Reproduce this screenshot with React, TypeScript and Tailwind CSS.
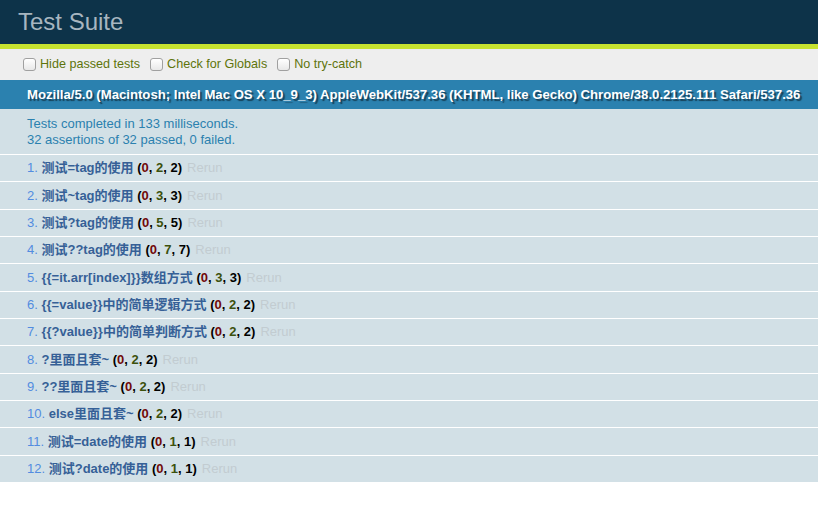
const tests = [
  { name: '测试=tag的使用', failed: 0, passed: 2, total: 2 },
  { name: '测试~tag的使用', failed: 0, passed: 3, total: 3 },
  { name: '测试?tag的使用', failed: 0, passed: 5, total: 5 },
  { name: '测试??tag的使用', failed: 0, passed: 7, total: 7 },
  { name: '{{=it.arr[index]}}数组方式', failed: 0, passed: 3, total: 3 },
  { name: '{{=value}}中的简单逻辑方式', failed: 0, passed: 2, total: 2 },
  { name: '{{?value}}中的简单判断方式', failed: 0, passed: 2, total: 2 },
  { name: '?里面且套~', failed: 0, passed: 2, total: 2 },
  { name: '??里面且套~', failed: 0, passed: 2, total: 2 },
  { name: 'else里面且套~', failed: 0, passed: 2, total: 2 },
  { name: '测试=date的使用', failed: 0, passed: 1, total: 1 },
  { name: '测试?date的使用', failed: 0, passed: 1, total: 1 },
]

const toolbarOptions = ['Hide passed tests', 'Check for Globals', 'No try-catch']

function Checkbox() {
  return (
    <span className="inline-block w-[13px] h-[13px] rounded-[3px] border border-[#a0a0a0] bg-gradient-to-b from-white to-[#e8e8e8] shadow-[inset_0_1px_0_rgba(255,255,255,0.8)]" />
  )
}

export default function App() {
  return (
    <div className="w-[818px] min-h-[508px] bg-white font-['Liberation_Sans','Noto_Sans_CJK_SC',sans-serif]">
      {/* Header */}
      <h1 className="h-[44px] bg-[#0d3349] pl-[18px] flex items-center text-[24px] leading-[24px] font-normal text-[#a7b6c0]">
        Test Suite
      </h1>
      <div className="h-[5px] bg-[#c6e330]" />

      {/* Toolbar */}
      <div className="h-[31px] bg-[#eeeeee] pl-[23px] flex items-center gap-[10px] text-[12.6px] text-[#5e740b]">
        {toolbarOptions.map((label) => (
          <label key={label} className="flex items-center gap-[4px]">
            <Checkbox />
            <span>{label}</span>
          </label>
        ))}
      </div>

      {/* User agent */}
      <div className="h-[29px] bg-[#2b81af] pl-[27px] flex items-center text-[13.15px] font-bold text-white [text-shadow:rgba(0,0,0,0.5)_2px_2px_1px] whitespace-nowrap">
        Mozilla/5.0 (Macintosh; Intel Mac OS X 10_9_3) AppleWebKit/537.36 (KHTML, like Gecko) Chrome/38.0.2125.111 Safari/537.36
      </div>

      {/* Result */}
      <div className="bg-[#d2e0e6] pl-[27px] pt-[7px] pb-[6px] text-[13px] leading-[16px] text-[#2b81af] border-b border-white">
        <div>Tests completed in 133 milliseconds.</div>
        <div>32 assertions of 32 passed, 0 failed.</div>
      </div>

      {/* Tests */}
      <ol>
        {tests.map((t, i) => (
          <li
            key={i}
            className="bg-[#d2e0e6] pl-[27px] py-[5.2px] h-[27.35px] leading-[16px] text-[13px] text-[#528ce0] border-b border-white whitespace-nowrap overflow-hidden"
          >
            <span>{i + 1}. </span>
            <strong className="font-bold">
              <span className="text-[#366097]">{t.name}</span>{' '}
              <b className="text-black">
                (<b className="text-[#710909]">{t.failed}</b>, <b className="text-[#3c510c]">{t.passed}</b>, {t.total})
              </b>
            </strong>
            <a className="px-[5px] text-[#c2ccd1]">Rerun</a>
          </li>
        ))}
      </ol>
    </div>
  )
}
